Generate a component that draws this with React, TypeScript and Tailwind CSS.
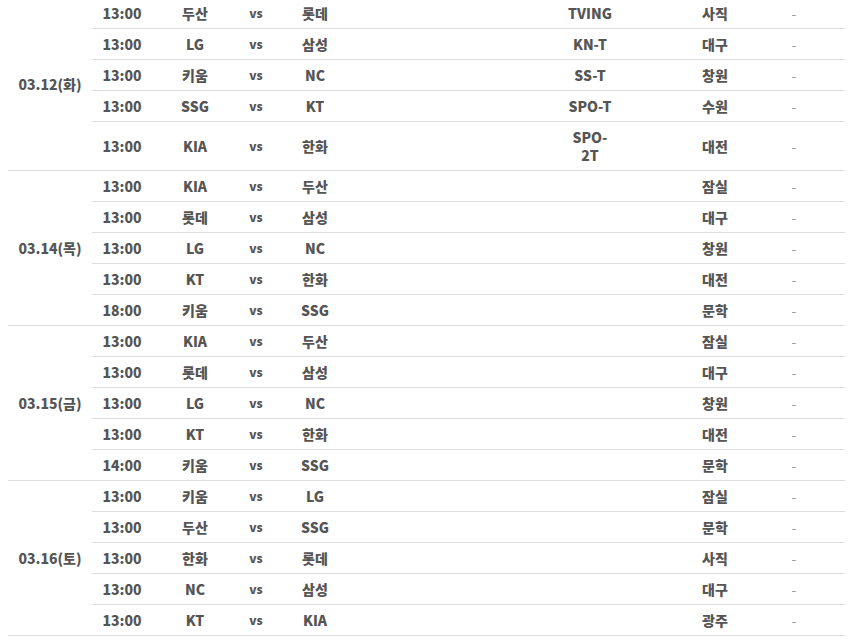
import React from 'react';

type Game = { time: string; home: string; away: string; tv?: string; stadium: string; tall?: boolean };
type Day = { date: string; games: Game[] };

const schedule: Day[] = [
  {
    date: '03.12(화)',
    games: [
      { time: '13:00', home: '두산', away: '롯데', tv: 'TVING', stadium: '사직' },
      { time: '13:00', home: 'LG', away: '삼성', tv: 'KN-T', stadium: '대구' },
      { time: '13:00', home: '키움', away: 'NC', tv: 'SS-T', stadium: '창원' },
      { time: '13:00', home: 'SSG', away: 'KT', tv: 'SPO-T', stadium: '수원' },
      { time: '13:00', home: 'KIA', away: '한화', tv: 'SPO-2T', stadium: '대전', tall: true },
    ],
  },
  {
    date: '03.14(목)',
    games: [
      { time: '13:00', home: 'KIA', away: '두산', stadium: '잠실' },
      { time: '13:00', home: '롯데', away: '삼성', stadium: '대구' },
      { time: '13:00', home: 'LG', away: 'NC', stadium: '창원' },
      { time: '13:00', home: 'KT', away: '한화', stadium: '대전' },
      { time: '18:00', home: '키움', away: 'SSG', stadium: '문학' },
    ],
  },
  {
    date: '03.15(금)',
    games: [
      { time: '13:00', home: 'KIA', away: '두산', stadium: '잠실' },
      { time: '13:00', home: '롯데', away: '삼성', stadium: '대구' },
      { time: '13:00', home: 'LG', away: 'NC', stadium: '창원' },
      { time: '13:00', home: 'KT', away: '한화', stadium: '대전' },
      { time: '14:00', home: '키움', away: 'SSG', stadium: '문학' },
    ],
  },
  {
    date: '03.16(토)',
    games: [
      { time: '13:00', home: '키움', away: 'LG', stadium: '잠실' },
      { time: '13:00', home: '두산', away: 'SSG', stadium: '문학' },
      { time: '13:00', home: '한화', away: '롯데', stadium: '사직' },
      { time: '13:00', home: 'NC', away: '삼성', stadium: '대구' },
      { time: '13:00', home: 'KT', away: 'KIA', stadium: '광주' },
    ],
  },
];

function GameRow({ game, last }: { game: Game; last: boolean }) {
  // the last row of a day has the day's border under it instead of its own
  const height = game.tall ? 'h-[48px]' : last ? 'h-[30px]' : 'h-[31px]';
  return (
    <div className={`flex items-center ${height} ${last ? '' : 'border-b border-[#dddddd]'}`}>
      <div className="w-[60px] text-center">{game.time}</div>
      <div className="w-[86px] text-center">{game.home}</div>
      <div className="w-[36px] text-center text-[12px]">vs</div>
      <div className="w-[82px] text-center">{game.away}</div>
      <div className="w-[211px]" />
      <div className="w-[46px] text-center">{game.tv}</div>
      <div className="w-[66px]" />
      <div className="w-[72px] text-center">{game.stadium}</div>
      <div className="w-[86px] text-center font-normal text-[#999999]">-</div>
      <div className="w-[7px]" />
    </div>
  );
}

export default function App() {
  return (
    <div className="min-h-screen bg-white pl-2 pr-[10px] font-['Noto_Sans_CJK_KR',sans-serif] text-[14px] leading-[18px] font-extrabold text-[#555555]">
      <div className="-mt-[2px]">
        {schedule.map((day) => (
          <div key={day.date} className="flex border-b border-[#dddddd]">
            <div className="w-[84px] flex items-center justify-center">{day.date}</div>
            <div className="flex-1">
              {day.games.map((g, i) => (
                <GameRow key={i} game={g} last={i === day.games.length - 1} />
              ))}
            </div>
          </div>
        ))}
      </div>
    </div>
  );
}
